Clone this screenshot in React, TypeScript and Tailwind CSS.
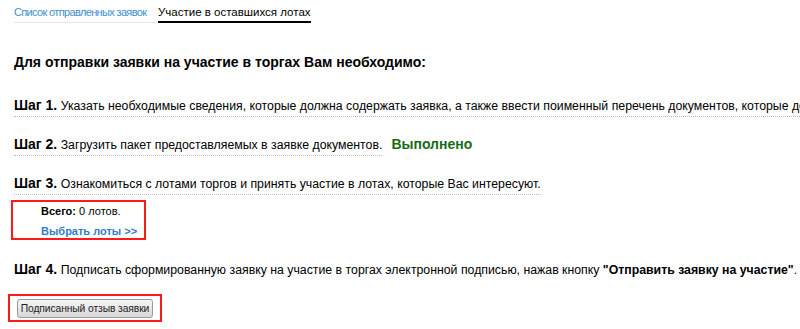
import React from "react";

export default function App() {
  const arial = { fontFamily: '"Liberation Sans", Arial, sans-serif' };
  return (
    <div className="w-[800px] h-[329px] overflow-hidden bg-white text-black" style={arial}>
      {/* Tabs */}
      <div className="flex pl-[14px] pt-[4px]">
        <div className="w-[144px] shrink-0 overflow-hidden pb-[2px] border-b border-[#e6e6e6] text-[#3d8fd2] text-[11px] tracking-[-0.65px] leading-[16px] whitespace-nowrap">
          Список отправленных заявок
        </div>
        <div className="pb-[1px] border-b-2 border-black text-black text-[11.5px] leading-[16px] whitespace-nowrap">
          Участие в оставшихся лотах
        </div>
      </div>

      <div className="pl-[14px]">
        <h1 className="mt-[29px] text-[14px] font-bold leading-[20px] whitespace-nowrap">
          Для отправки заявки на участие в торгах Вам необходимо:
        </h1>

        <div className="mt-[21px] h-[39px] whitespace-nowrap">
          <span className="inline-block border-b border-dotted border-[#b8b8b8] pb-[1px] text-[12.3px] leading-[17px]">
            <b className="text-[14px]">Шаг 1.</b> Указать необходимые сведения, которые должна содержать заявка, а также ввести поименный перечень документов, которые должны быть приложены к заявке.
          </span>
        </div>

        <div className="h-[39px] whitespace-nowrap">
          <span className="inline-block border-b border-dotted border-[#b8b8b8] pb-[1px] text-[12.3px] leading-[17px]">
            <b className="text-[14px]">Шаг 2.</b> Загрузить пакет предоставляемых в заявке документов.
          </span>
          <span className="ml-[9px] text-[14px] font-bold text-[#176b17] leading-[17px]">Выполнено</span>
        </div>

        <div className="whitespace-nowrap h-[19px]">
          <span className="inline-block border-b border-dotted border-[#b8b8b8] pb-[1px] text-[12.3px] leading-[17px]">
            <b className="text-[14px]">Шаг 3.</b> Ознакомиться с лотами торгов и принять участие в лотах, которые Вас интересуют.
          </span>
        </div>
      </div>

      <div className="ml-[11px] mt-[10px] w-[135px] h-[40px] border-2 border-[#ff1a1a] pl-[28px] pt-[2px] text-[11px]">
        <div className="leading-[14px] whitespace-nowrap">
          <b>Всего:</b> 0 лотов.
        </div>
        <div className="mt-[6px] leading-[14px] font-bold text-[#2e7fc6] whitespace-nowrap">Выбрать лоты &gt;&gt;</div>
      </div>

      <div className="pl-[14px] mt-[21px] h-[17px] whitespace-nowrap text-[12.3px] leading-[17px]">
        <b className="text-[14px]">Шаг 4.</b> Подписать сформированную заявку на участие в торгах электронной подписью, нажав кнопку{" "}
        <b>"Отправить заявку на участие"</b>.
      </div>

      <div className="ml-[8px] mt-[16px] w-[154px] h-[28px] border-2 border-[#ff1a1a] pl-[7px] pt-[3px]">
        <button
          className="flex items-center justify-center w-[136px] h-[19px] whitespace-nowrap text-[10.3px] tracking-[-0.1px] text-[#222] border border-[#9a9a9a] rounded-[3px] bg-gradient-to-b from-[#f6f6f6] to-[#d8d8d8]"
          style={arial}
        >
          Подписанный отзыв заявки
        </button>
      </div>
    </div>
  );
}
